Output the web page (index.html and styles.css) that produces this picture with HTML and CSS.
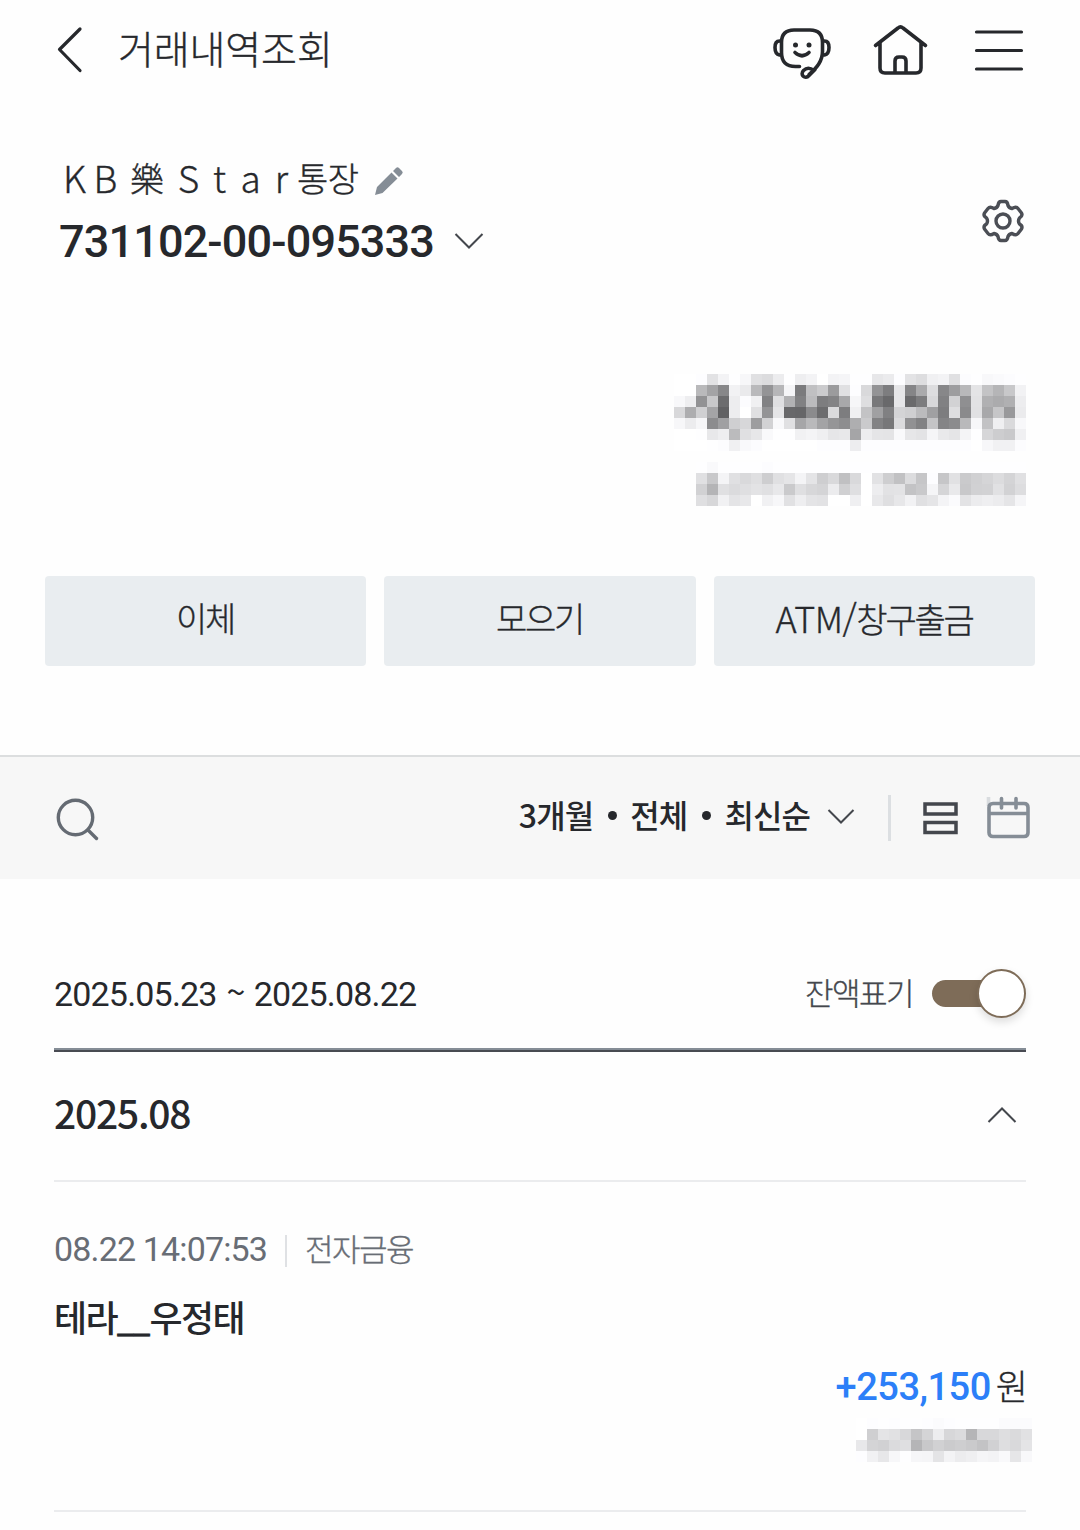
FILE: index.html
```
<!DOCTYPE html>
<html lang="ko">
<head>
<meta charset="utf-8">
<title>거래내역조회</title>
<link rel="stylesheet" href="styles.css">
</head>
<body>
<header class="topbar">
  <svg class="back" width="28" height="48" viewBox="0 0 28 48"><path d="M24 3 3.500 23.500 24 44.500"/></svg>
  <h1 class="title">거래내역조회</h1>
  <nav class="top-icons">
    <svg width="60" height="54" viewBox="0 0 60 54"><path d="M27.500 43.500H23.500Q9.500 43.500 9.500 29.500V19.500Q9.500 7 22 7H38Q50.500 7 50.500 19.500V28.500C50.500 38 45 44.500 37 51.500M9.500 18H7.500Q3 18 3 24.500T7.500 32H9.500M50.500 18H52.500Q57 18 57 24.500T52.500 32H50.500M23 29.500Q30 36 37 29.500M43 46.500 37 52.500C33 57 27.500 51.500 31.500 47.500Q36 43 42 47.500"/><circle class="dot" cx="23.500" cy="22" r="2.500"/><circle class="dot" cx="37" cy="22" r="2.500"/></svg>
    <svg width="54" height="54" viewBox="0 0 54 54"><path d="M1.500 22.500 24 5Q26.500 2.700 29 5L51.500 22.500M6 20V45Q6 50 11 50H42Q47 50 47 45V20M21 50V38Q21 34 25 34H28Q32 34 32 38V50"/></svg>
    <svg width="50" height="54" viewBox="0 0 50 54"><path d="M2.500 9H47.500M2.500 27.500H47.500M2.500 46H47.500"/></svg>
  </nav>
</header>

<section class="account">
  <div class="account-info">
    <div class="account-name"><i>K</i><i>B</i><span class="hanja">樂</span><i>S</i><i>t</i><i>a</i><i>r</i><span class="suffix">통장</span>
      <svg class="pencil" width="30" height="30" viewBox="0 0 30 30"><path d="M1 29 3 21 17.500 6.500 23.500 12.500 8.500 27ZM19 5 22 2Q23.500 .5 25 2L28 5Q29.500 6.500 28 8L25 11Z"/></svg>
    </div>
    <div class="account-number">731102-00-095333
      <svg class="chev" width="30" height="18" viewBox="0 0 30 18"><path d="M1.500 2 15 15.500 28.500 2"/></svg>
    </div>
  </div>
  <svg class="gear" width="44" height="44" viewBox="0 0 44 44"><path d="M17 6.500Q17.500 2.500 20 2.500H24Q26.500 2.500 27 6.500Q28 9 31 9.500Q35 7 37 9.500L40.500 14Q42 17 38.500 19Q36.500 22 38.500 25Q42 27 40.500 30L37 34.500Q35 37 31 34.500Q28 35 27 37.500Q26.500 41.500 24 41.500H20Q17.500 41.500 17 37.500Q16 35 13 34.500Q9 37 7 34.500L3.500 30Q2 27 5.500 25Q7.500 22 5.500 19Q2 17 3.500 14L7 9.500Q9 7 13 9.500Q16 9 17 6.500Z"/><circle cx="22" cy="22" r="7"/></svg>
</section>

<section class="balance">
  <svg class="mosaic" id="balance-main" width="352" height="77"></svg>
  <svg class="mosaic" id="balance-sub" width="330" height="44"></svg>
</section>

<div class="actions">
  <button class="action">이체</button>
  <button class="action">모으기</button>
  <button class="action"><span class="latin">ATM/</span>창구출금</button>
</div>

<div class="filters">
  <svg class="search" width="44" height="44" viewBox="0 0 44 44"><circle cx="19.500" cy="19.500" r="17.200"/><path d="M32 32 40.500 40.500"/></svg>
  <div class="filter-text"><span>3개월</span><i></i><span>전체</span><i></i><span>최신순</span></div>
  <svg class="chev filter-chev" width="28" height="18" viewBox="0 0 28 18"><path d="M1.500 2 14 14.500 26.500 2"/></svg>
  <span class="divider"></span>
  <svg class="list-icon" width="35" height="34" viewBox="0 0 35 34"><path d="M2 3H33V13H2ZM2 21.500H33V31.500H2Z"/></svg>
  <svg class="calendar" width="44" height="44" viewBox="0 0 44 44"><path class="corner" d="M2.500 1V10"/><path d="M7 7.500H38Q42 7.500 42 11.500V36.500Q42 40.500 38 40.500H7Q3 40.500 3 36.500V11.500Q3 7.500 7 7.500ZM3 17.500H42M15.500 2.500V12M30 2.500V12"/></svg>
</div>

<main class="history">
  <div class="period">
    <span class="dates">2025.05.23<b>~</b>2025.08.22</span>
    <span class="toggle-label">잔액표기</span>
    <span class="toggle"><span class="knob"></span></span>
  </div>
  <div class="month">
    <h2>2025.08</h2>
    <svg class="chev" width="30" height="18" viewBox="0 0 30 18"><path d="M1.500 16 15 2.500 28.500 16"/></svg>
  </div>
  <article class="entry">
    <div class="meta"><span class="time">08.22 14:07:53</span><span class="bar"></span><span class="kind">전자금융</span></div>
    <div class="payee">테라<span class="gap">__</span>우정태</div>
    <div class="amount"><strong>+253,150</strong><span>원</span></div>
    <svg class="mosaic after" id="entry-balance" width="176" height="44"></svg>
  </article>
</main>
<script src="mosaic.js"></script>
</body>
</html>
```
FILE: styles.css
```
* { box-sizing: border-box; }
body {
  margin: 0;
  width: 1080px;
  height: 1530px;
  overflow: hidden;
  background: #fefefe;
  color: #26282c;
  font-family: Roboto, "Noto Sans CJK KR", sans-serif;
}
svg { display: block; flex: none; overflow: visible; fill: none; stroke: #26282c; stroke-width: 3; stroke-linecap: round; stroke-linejoin: round; }
h1, h2 { margin: 0; }

/* Slightly firmer strokes for the light Korean text */
.title, .account-name, .action, .toggle-label, .kind, .amount span { -webkit-text-stroke: .35px currentColor; }

.topbar { display: flex; align-items: center; height: 100px; padding: 0 56px 0 56px; }
.back { stroke-width: 3.2; }
.title { margin-left: 34px; padding-bottom: 7px; font: 300 39px/60px "Noto Sans CJK KR", sans-serif; letter-spacing: -.1px; }
.top-icons { display: flex; gap: 46px; margin-left: auto; }
.top-icons svg { stroke-width: 3.600; }
.top-icons svg:first-child { margin-right: -4px; }
.top-icons svg:last-child { stroke-width: 3.200; }
.top-icons .dot { fill: #26282c; stroke: none; }

.account { display: flex; justify-content: space-between; height: 274px; padding: 54px 55px 0 59px; }
.account-name { display: flex; align-items: center; height: 52px; font: 300 34px/48px "Noto Sans CJK KR", sans-serif; }
.account-name i { width: 31px; padding-bottom: 6px; font-size: 37px; font-style: normal; text-align: center; }
.account-name span { padding-bottom: 4px; }
.account-name .hanja { width: 52px; text-align: center; }
.suffix { letter-spacing: -.500px; }
.pencil { margin: 1px 0 0 15px; fill: #858d96; stroke: none; }
.account-number { display: flex; align-items: center; height: 70px; padding-top: 2px; font-size: 45px; font-weight: 500; line-height: 68px; letter-spacing: -.850px; }
.chev { stroke: #44474d; stroke-width: 2; stroke-linecap: butt; stroke-linejoin: miter; }
.account-number .chev { margin: -2px 0 0 20px; }
.gear { margin-top: 45px; stroke: #4b4e55; stroke-width: 3.400; }

.balance { display: flex; flex-direction: column; align-items: flex-end; gap: 11px; height: 202px; padding-right: 54px; }
.mosaic { stroke: none; shape-rendering: crispEdges; }

.actions { display: grid; grid-template-columns: 321px 312px 321px; gap: 18px; height: 90px; margin: 0 45px; }
.action { border: 0; border-radius: 4px; padding: 0 1px 6px 0; background: #e9edf0; color: #26282c; font: 300 34px/50px "Noto Sans CJK KR", sans-serif; letter-spacing: -2.200px; }
.latin { font-size: 36px; letter-spacing: -.500px; }

.filters { display: flex; align-items: center; height: 124px; margin-top: 89px; padding: 0 50px 0 56px; border-top: 2px solid #dcdedf; background: #f7f7f7; }
.search { margin-top: 3px; stroke: #656b73; stroke-width: 3.400; }
.filter-text { display: flex; align-items: center; margin: -8px 0 0 auto; font: 500 32px/50px "Noto Sans CJK KR", sans-serif; letter-spacing: -.900px; }
.filter-text i { width: 9px; height: 9px; margin: 2px 13px 0 15px; border-radius: 50%; background: #26282c; }
.filter-chev { margin: -2px 0 0 17px; }
.divider { width: 3px; height: 46px; margin: 0 32px 0 33px; background: #dcdfe2; }
.list-icon { stroke: #44474d; stroke-width: 3.500; stroke-linejoin: miter; }
.calendar { margin-left: 28px; stroke: #858d96; stroke-width: 3.600; }
.calendar .corner { stroke: #d9dcdf; stroke-linecap: butt; }

.history { margin: 0 54px; }
.period { display: flex; align-items: center; height: 173px; padding: 58px 0 2px; background: linear-gradient(#858d96 50%, #484b52 50%) bottom / 100% 4px no-repeat; }
.dates { padding-bottom: 4px; font-size: 34px; letter-spacing: -.820px; }
.dates b { position: relative; top: -1px; margin: 0 9px 0 10px; font-weight: 400; font-family: "Noto Sans CJK KR", sans-serif; }
.toggle-label { margin-left: auto; padding-bottom: 4px; color: #44474d; font: 300 31px/50px "Noto Sans CJK KR", sans-serif; letter-spacing: -1.500px; }
.toggle { display: flex; justify-content: flex-end; align-items: center; width: 94px; height: 27px; margin-left: 19px; border-radius: 14px; background: linear-gradient(90deg, #7e6c58 65px, transparent 65px); }
.knob { width: 49px; height: 49px; border: 2px solid #7e6c58; border-radius: 50%; background: #fff; box-shadow: 0 4px 8px #0002; }
.month { display: flex; align-items: center; justify-content: space-between; height: 130px; padding: 0 9px 2px 0; border-bottom: 2px solid #ebecee; }
.month h2 { padding-bottom: 7px; font: 500 39px/60px "Noto Sans CJK KR", sans-serif; letter-spacing: -1.250px; }
.entry { display: flex; flex-direction: column; height: 330px; padding-top: 42px; border-bottom: 2px solid #ebecee; }
.meta { display: flex; align-items: center; height: 50px; color: #686d75; font-size: 34px; letter-spacing: -.850px; }
.bar { width: 2px; height: 32px; margin: 4px 18px 0; background: #dfe1e4; }
.kind { padding-bottom: 3px; font: 300 31px/50px "Noto Sans CJK KR", sans-serif; letter-spacing: -1.500px; }
.payee { height: 88px; font: 500 36px/84px "Noto Sans CJK KR", sans-serif; letter-spacing: -1.600px; }
.gap { font-size: 30px; line-height: 1; letter-spacing: -.700px; -webkit-text-stroke: .8px currentColor; }
.amount { display: flex; align-items: center; justify-content: flex-end; height: 50px; }
.amount strong { color: #2c7ff8; font-size: 38px; font-weight: 500; letter-spacing: -.500px; }
.amount span { margin: 0 -2px 0 5px; padding-bottom: 4px; font: 300 35px/50px "Noto Sans CJK KR", sans-serif; }
.after { margin: 6px -6px 0 auto; }
```
FILE: mosaic.js
```
// Masked amounts: one grey level (hex byte) per 11px cell, row by row.
const CELL = 11;
const masks = {
  "balance-main": [
    "fffffde2f3fef7e0dcecfeeef3fff3f5fefee7ebfde3ddf0f3e0fcfef8fafcfe",
    "ffffb9a387f2eab994b6f57bc0cb9be0fdd9937de685aadd879db8e4c3b5c8f2",
    "f8ee92c86cedfcf082dfb281bb7d83a8f6de7869e66a7cd881d28fe2b0abb0ed",
    "d8add0a461edffe094e568668b6cda7df0c3a080d4cfbba07dde8ae1a8c699eb",
    "f7ecf68ca0cfd79dd2f9e0a6b9a3958daeca8277db9182c4848bb9f7c2efdaf8",
    "fffffee8eebbe0e7f9fefef1f4efe6e8a5ede5e4f9e6e3f5e9e5f4fed6cdc9f0",
    "fffffffefcf0f9fcfffffffffffdfdfdedfdfdfdfdfdfdfdfdfdfdfff7f1f1fc"
  ],
  "balance-sub": [
    "fef9fefefefefcfefefefefefefefefefefefefefefefefefefefefefefe",
    "e0c8f4e0d9dfcee0e5f4e4ced9c0d9ffe2cec1dcc6fdc6e1cad0d5dcd4e0",
    "d1b4e0dbdfe3e0e8cadfd7d4ecd0dfffede2e3c3c9f5d5e9c8d1d2e1d2dd",
    "dfd7f1e4e8fff1f7e1eee4e2ffffefffe8dfe7f2e0e5f4fbe3ecefece5f5"
  ],
  "entry-balance": [
    "fffdfefdfefefdfbfdfefefefefbfbfb",
    "ffcfe4e1d8c5d4edd7dbb5d8d8dedae1",
    "e8d4d1dbdfb5c8d1cbcecac3d1ded9e4",
    "fdf1e7f7fef6f5e4f3eceff5f3f9e6f8"
  ]
};
for (const [id, rows] of Object.entries(masks)) {
  const svg = document.getElementById(id);
  rows.forEach((row, y) => row.match(/../g).forEach((hex, x) => {
    const rect = document.createElementNS("http://www.w3.org/2000/svg", "rect");
    const v = parseInt(hex, 16);
    rect.setAttribute("x", x * CELL);
    rect.setAttribute("y", y * CELL);
    rect.setAttribute("width", CELL);
    rect.setAttribute("height", CELL);
    rect.setAttribute("fill", `rgb(${v},${v},${Math.min(v + 2, 255)})`);
    svg.append(rect);
  }));
}
```
